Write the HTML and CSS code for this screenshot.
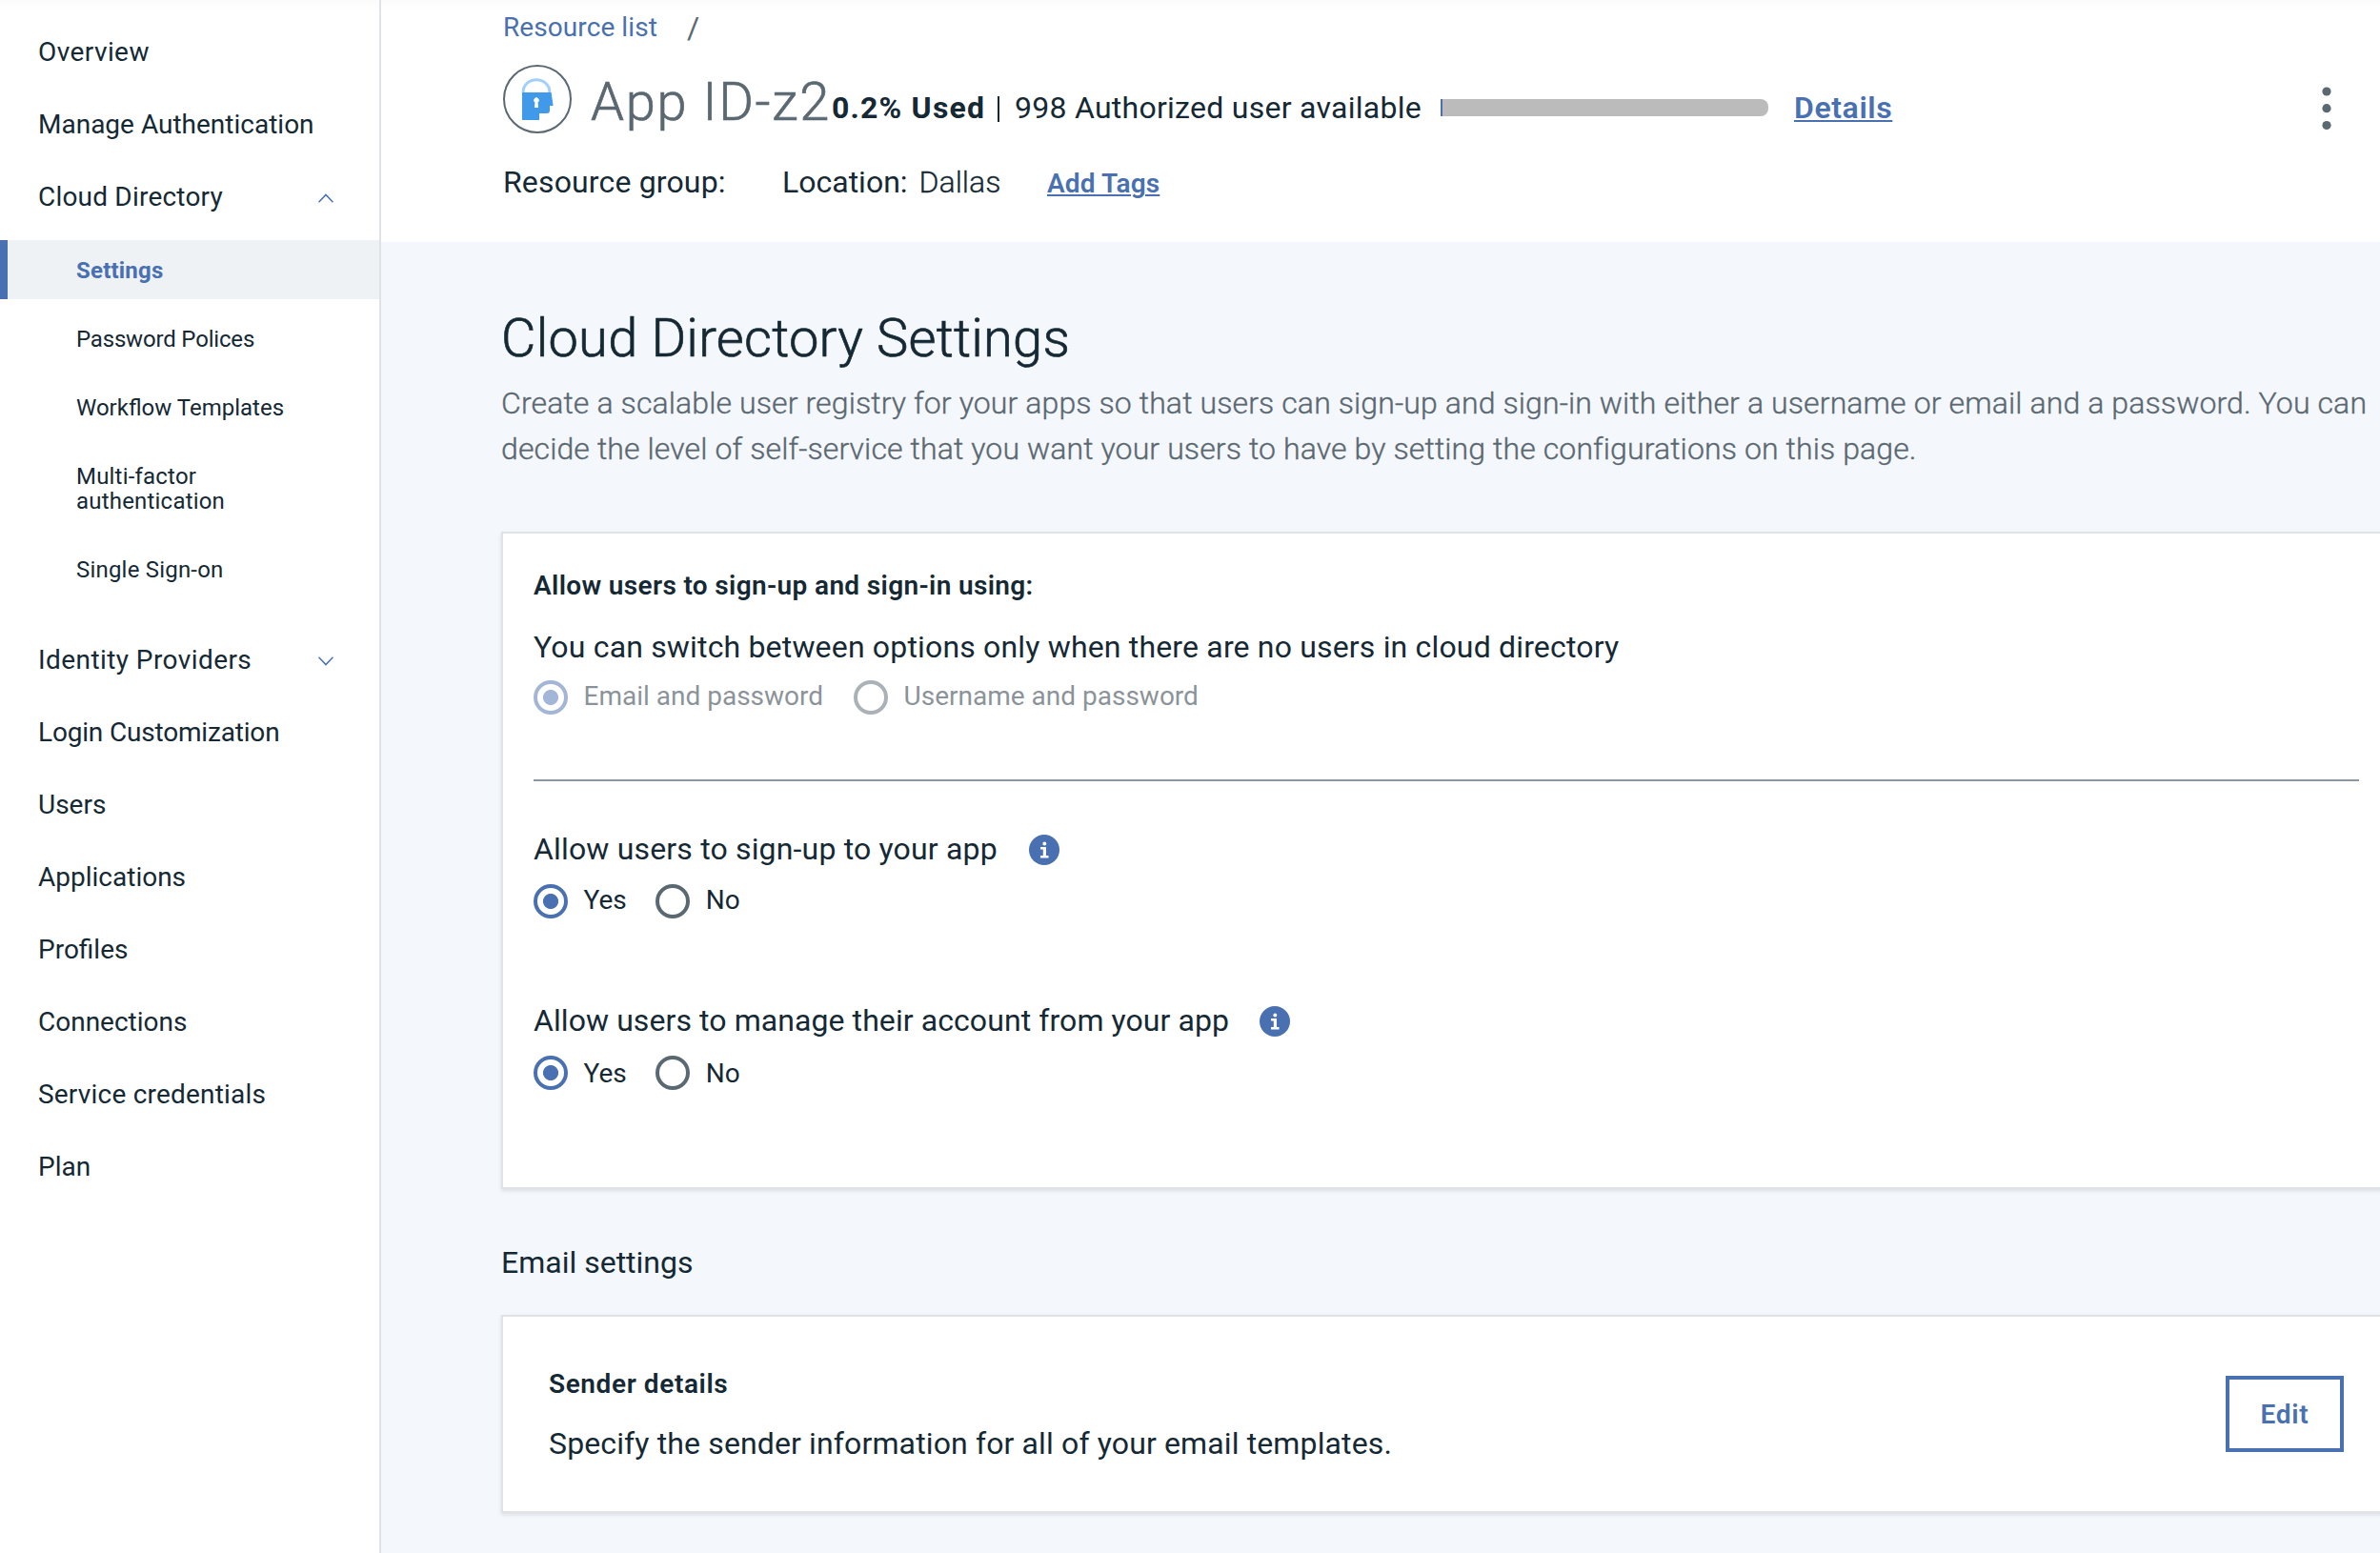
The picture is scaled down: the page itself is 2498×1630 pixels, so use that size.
FILE: index.html
```html
<!DOCTYPE html>
<html lang="en">
<head>
<meta charset="utf-8">
<title>Cloud Directory Settings</title>
<link rel="stylesheet" href="styles.css">
</head>
<body>
<div class="app">
  <nav class="sidebar">
    <a class="nav-item track-wide">Overview</a>
    <a class="nav-item">Manage Authentication</a>
    <a class="nav-item track-open">Cloud Directory
      <svg class="chevron" viewBox="0 0 16 10"><path d="M0.5 9.2 8 1.4l7.5 7.8"/></svg>
    </a>
    <div class="subnav">
      <a class="sub-item sub-item--active">Settings</a>
      <a class="sub-item track-tight">Password Polices</a>
      <a class="sub-item">Workflow Templates</a>
      <a class="sub-item track-open">Multi-factor<br>authentication</a>
      <a class="sub-item track-open">Single Sign-on</a>
    </div>
    <a class="nav-item track-wide">Identity Providers
      <svg class="chevron" viewBox="0 0 16 10"><path d="M0.5 0.8 8 8.6l7.5-7.8"/></svg>
    </a>
    <a class="nav-item track-tight">Login Customization</a>
    <a class="nav-item">Users</a>
    <a class="nav-item">Applications</a>
    <a class="nav-item">Profiles</a>
    <a class="nav-item">Connections</a>
    <a class="nav-item track-open">Service credentials</a>
    <a class="nav-item">Plan</a>
  </nav>

  <div class="page">
    <header class="header">
      <div class="breadcrumb"><a class="crumb">Resource list</a><span class="slash">/</span></div>
      <div class="title-row">
        <svg class="app-icon" viewBox="0 0 72 72">
          <circle cx="36" cy="36" r="35" fill="#fff" stroke="#5a6872" stroke-width="2"/>
          <path d="M21.2 29V28a13.8 12.2 0 0 1 27.6 0v1" fill="none" stroke="#a3cffa" stroke-width="3"/>
          <path d="M20 29h30.6l2 14h-3.6v5q0 3-3 3h-8v7H20z" fill="#4199e9"/>
          <path d="M36.6 39.4 37 45h-4l.4-5.600a2.700 2.700 0 1 1 3.200 0z" fill="#fff"/>
        </svg>
        <h1 class="app-name">App ID-z2</h1>
        <div class="usage"><b class="used">0.2% Used</b><span class="divider"></span><span class="avail">998 Authorized user available</span></div>
        <div class="meter"></div>
        <a class="link details">Details</a>
        <svg class="overflow" viewBox="0 0 10 46"><circle cx="5" cy="5" r="4.6"/><circle cx="5" cy="22.700" r="4.6"/><circle cx="5" cy="40.500" r="4.6"/></svg>
      </div>
      <div class="meta-row">
        <span class="group">Resource group:</span>
        <span class="location">Location:</span>
        <span class="region">Dallas</span>
        <a class="link tags">Add Tags</a>
      </div>
    </header>

    <main class="content">
      <h2 class="heading">Cloud Directory Settings</h2>
      <p class="intro">Create a scalable user registry for your apps so that users can sign-up and sign-in with either a username or email and a password. You can<br>decide the level of self-service that you want your users to have by setting the configurations on this page.</p>

      <section class="card signup-card">
        <h3 class="card-title">Allow users to sign-up and sign-in using:</h3>
        <p class="text switch-note">You can switch between options only when there are no users in cloud directory</p>
        <div class="radios radios--disabled">
          <label class="option"><span class="radio radio--on"></span>Email and password</label>
          <label class="option"><span class="radio"></span>Username and password</label>
        </div>
        <div class="rule"></div>
        <div class="question">
          <span class="text">Allow users to sign-up to your app</span>
          <svg class="info" viewBox="0 0 32 32"><circle cx="16" cy="16" r="16"/><path d="M12 13h6v9h2.500v2.500H12V22h2.800v-6.500H12zM16.300 7.600a2 2 0 1 1 0 4 2 2 0 0 1 0-4z"/></svg>
        </div>
        <div class="radios radios--answer">
          <label class="option"><span class="radio radio--on"></span>Yes</label>
          <label class="option"><span class="radio"></span>No</label>
        </div>
        <div class="question question--account">
          <span class="text">Allow users to manage their account from your app</span>
          <svg class="info" viewBox="0 0 32 32"><circle cx="16" cy="16" r="16"/><path d="M12 13h6v9h2.500v2.500H12V22h2.800v-6.500H12zM16.300 7.600a2 2 0 1 1 0 4 2 2 0 0 1 0-4z"/></svg>
        </div>
        <div class="radios radios--answer radios--account">
          <label class="option"><span class="radio radio--on"></span>Yes</label>
          <label class="option"><span class="radio"></span>No</label>
        </div>
      </section>

      <h3 class="section-title">Email settings</h3>
      <section class="card sender-card">
        <div>
          <h4 class="card-title sender-title">Sender details</h4>
          <p class="text sender-text">Specify the sender information for all of your email templates.</p>
        </div>
        <button class="edit">Edit</button>
      </section>
    </main>
  </div>
</div>
</body>
</html>
```
FILE: styles.css
```css
* { box-sizing: border-box; }

body {
  margin: 0;
  overflow: hidden;
  background: #fff;
  color: #152935;
  font: 400 28px/33px Roboto, "Liberation Sans", sans-serif;
}

h1, h2, h3, h4, p { margin: 0; font-weight: 400; white-space: nowrap; }

.app { display: flex; height: 1630px; }

/* Letter-spacing helpers */
.track-wide { letter-spacing: 0.42px; }
.track-open { letter-spacing: 0.2px; }
.track-tight { letter-spacing: -0.18px; }

/* Sidebar */
.sidebar {
  flex: none;
  width: 400px;
  padding-top: 16px;
  border-right: 2px solid #dfe3e6;
  background: linear-gradient(#fbfbfb, #fff 12px);
}
.nav-item {
  display: flex;
  align-items: center;
  justify-content: space-between;
  height: 76px;
  padding: 0 48px 0 40px;
}
.chevron { width: 16px; height: 10px; margin-top: 3px; fill: none; stroke: #4970b0; stroke-width: 1.5; }
.subnav { display: flex; flex-direction: column; gap: 10px; margin: 8px 0 26px; }
.sub-item { display: block; padding: 19px 0 17px 80px; font-size: 24px; line-height: 26px; }
.sub-item--active {
  padding-left: 72px;
  border-left: 8px solid #4970b0;
  background: #eef2f5;
  color: #4970b0;
  font-weight: 700;
  letter-spacing: 0.2px;
}

/* Header */
.page { flex: 1; min-width: 0; display: flex; flex-direction: column; }
.header { flex: none; height: 254px; padding-left: 128px; background: linear-gradient(#fbfbfb, #fff 12px); }
.breadcrumb { display: flex; height: 56px; margin-bottom: 12px; line-height: 58px; }
.crumb { letter-spacing: 0.08px; color: #4970b0; }
.slash { margin: 0 0 0 31px; color: #5a6872; font-size: 32px; }
.title-row { display: flex; align-items: flex-start; height: 72px; }
.app-icon { flex: none; width: 72px; height: 72px; }
.app-name {
  width: 252px;
  margin: 6px 0 0 20px;
  color: #5a6872;
  font-size: 56px;
  font-weight: 300;
  line-height: 66px;
  letter-spacing: 1.7px;
  -webkit-text-stroke: 0.7px;
}
.usage { display: flex; width: 619px; margin: 26px 20px 0 1px; font-size: 32px; line-height: 38px; white-space: nowrap; }
.used { width: 176px; font-weight: 700; letter-spacing: 1.2px; }
.divider { width: 2px; height: 27px; margin: 7px 16px 0 0; background: #152935; }
.avail { letter-spacing: 0.27px; }
.meter {
  width: 344px;
  height: 18px;
  margin: 36px 27px 0 0;
  border-radius: 0 8px 8px 0;
  background: linear-gradient(90deg, #4970b0 2px, #bbb 2px);
}
.link { color: #4970b0; font-weight: 600; text-decoration: underline; text-decoration-thickness: 2px; text-underline-offset: 2px; }
.details { margin-top: 26px; font-size: 32px; line-height: 38px; letter-spacing: 0.6px; }
.overflow { width: 10px; height: 46px; margin: 23px 51px 0 auto; fill: #5a6872; }
.meta-row { display: flex; align-items: baseline; margin-top: 32px; font-size: 32px; line-height: 38px; }
.group { width: 293px; letter-spacing: 0.15px; }
.location { width: 143.5px; }
.region { width: 134.5px; font-weight: 300; -webkit-text-stroke: 0.3px; }
.tags { font-size: 28px; letter-spacing: 0.15px; }

/* Content */
.content { flex: 1; padding: 68px 0 0 126px; background: #f4f7fb; }
.heading { font-size: 56px; font-weight: 300; line-height: 66px; letter-spacing: 0.26px; -webkit-text-stroke: 0.7px; }
.intro { margin-top: 11px; color: #5a6872; font-size: 32px; font-weight: 300; line-height: 48px; letter-spacing: 0.11px; -webkit-text-stroke: 0.35px; }
.text { font-size: 32px; line-height: 38px; letter-spacing: 0.17px; }
.card {
  width: 1984px;
  border: 2px solid #dfe3e6;
  background: #fff;
  box-shadow: 0 2px 4px rgba(0, 0, 0, 0.1);
}
.card-title { font-size: 28px; font-weight: 600; letter-spacing: 0.35px; }
.signup-card { height: 690px; margin-top: 63px; padding: 38px 32px 0; }
.switch-note { margin: 29px 0 16px; }
.radios { display: flex; gap: 32px; height: 36px; }
.radios--disabled { margin-bottom: 68px; opacity: 0.5; }
.radios--answer { gap: 30.5px; }
.option { display: flex; }
.radio { width: 36px; height: 36px; margin-right: 16.5px; border: 4px solid #5a6872; border-radius: 50%; }
.radio--on { border-color: #4970b0; background: radial-gradient(circle, #4970b0 7.6px, #fff 8.4px); }
.rule { height: 2px; margin-bottom: 52px; background: #8897a2; }
.question { display: flex; align-items: center; gap: 33px; margin-bottom: 18px; }
.question--account { gap: 32px; margin-top: 88px; }
.question--account .text { letter-spacing: 0.08px; }
.info { width: 32px; height: 32px; margin-top: 2px; fill: #4970b0; }
.info path { fill: #fff; }
.radios--account .option { line-height: 37px; }
.section-title { margin: 58px 0 36px; font-size: 32px; line-height: 38px; }
.sender-card { display: flex; justify-content: space-between; height: 208px; padding: 54px 48px 0; }
.sender-title { letter-spacing: 0.6px; }
.sender-text { margin-top: 27px; letter-spacing: 0.13px; }
.edit {
  width: 124px;
  height: 80px;
  margin-top: 8px;
  padding: 1px 0 0;
  border: 4px solid #4970b0;
  background: #fff;
  color: #4970b0;
  font: 600 28px/71px Roboto, "Liberation Sans", sans-serif;
  letter-spacing: 0.7px;
}
```
